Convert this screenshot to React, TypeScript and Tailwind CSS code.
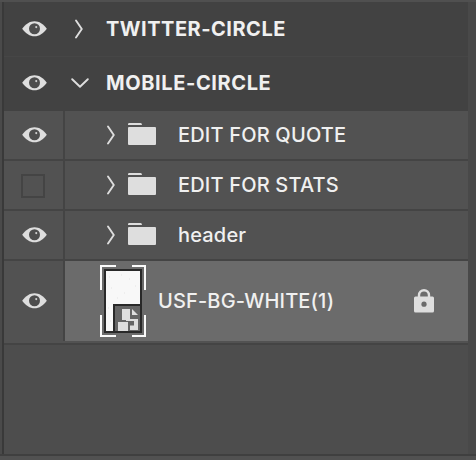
import React from 'react';
import { clsx } from 'clsx';

function EyeIcon() {
  return (
    <svg className="h-[15.5px] w-[25px] shrink-0" viewBox="0 0 26 16" preserveAspectRatio="none" aria-hidden="true">
      <path d="M0.2 8C4 3 8 0.2 13 0.2S22 3 25.8 8C22 13 18 15.8 13 15.8S4 13 0.2 8Z" fill="#dedede" />
      <circle cx="13" cy="8" r="5.7" fill="#4d4d4d" />
      <circle cx="14.8" cy="6.3" r="1.1" fill="#d2d2d2" />
    </svg>
  );
}

function ChevronRight() {
  return (
    <svg className="h-5 w-2.5" viewBox="0 0 10 20" fill="none" aria-hidden="true">
      <path d="M2 1.5L7.8 10L2 18.5" stroke="#dedede" strokeWidth="1.9" strokeLinecap="round" strokeLinejoin="round" />
    </svg>
  );
}

function ChevronDown() {
  return (
    <svg className="h-2.5 w-[18px]" viewBox="0 0 18 10" fill="none" aria-hidden="true">
      <path d="M1.2 1.2L9 8.7L16.8 1.2" stroke="#dedede" strokeWidth="1.9" strokeLinecap="round" strokeLinejoin="round" />
    </svg>
  );
}

function FolderIcon() {
  return (
    <svg className="h-[22px] w-7" viewBox="0 0 28 22" fill="#dedede" aria-hidden="true">
      <path d="M0 2V1.2Q0 0 1.2 0H12.6Q14 0 14 2Z" />
      <rect y="4" width="28" height="18" rx="1" />
    </svg>
  );
}

function LockIcon() {
  return (
    <svg className="h-6 w-5" viewBox="0 0 20 24" aria-hidden="true">
      <path d="M5 9V6.2a5 5 0 0110 0V9" fill="none" stroke="#dedede" strokeWidth="2.4" />
      <rect y="7.5" width="20" height="16" rx="1.5" fill="#dedede" />
      <circle cx="10" cy="15.2" r="2.6" fill="#6b6b6b" />
    </svg>
  );
}

// Smart object preview with the selection brackets around it
function Thumbnail() {
  return (
    <svg className="h-[72px] w-[46px]" viewBox="0 0 46 72" aria-hidden="true">
      <path d="M1 25V1H16M32 1H45V25M45 50V71H32M16 71H1V50" fill="none" stroke="#fafafa" strokeWidth="2" />
      <rect x="5" y="5" width="36" height="62" fill="#f8f8f8" stroke="#292929" strokeWidth="2" />
      <path d="M14 67V40H41" fill="none" stroke="#292929" strokeWidth="2" />
      <rect x="15" y="41" width="25" height="25" fill="#656565" />
      <path d="M22 44H30V54H38V65H30V60.5H34V56H26V55H22Z" fill="#dedede" />
      <path d="M32 44L38 50H32Z" fill="#dedede" />
      <rect x="18" y="57" width="10" height="9" fill="#dedede" />
      <path d="M9 12h1M21 10h1M29 14h1M11 23h1M24 28h1M35 21h1M17 33h1M8 43h1M10 56h1" stroke="#e4e4e4" />
    </svg>
  );
}

interface ArtboardRowProps {
  name: string;
  open?: boolean;
  className?: string;
}

function ArtboardRow({ name, open, className }: ArtboardRowProps) {
  return (
    <div className={clsx('flex items-center bg-[#424242] pl-[18px]', className)}>
      <EyeIcon />
      <div className={clsx('flex w-7 justify-center', open ? 'ml-[19px]' : 'ml-[18px]')}>
        {open ? <ChevronDown /> : <ChevronRight />}
      </div>
      <span
        className={clsx(
          'text-[20px] leading-6 font-bold',
          open ? 'ml-[12px] tracking-[0.6px]' : 'ml-[13px] tracking-[0.5px]'
        )}
      >
        {name}
      </span>
    </div>
  );
}

interface LayerRowProps {
  visible?: boolean;
  selected?: boolean;
  children: React.ReactNode;
}

function LayerRow({ visible = true, selected, children }: LayerRowProps) {
  return (
    <div className={clsx('flex border-b-2 border-[#444444] bg-[#525252]', selected ? 'h-[84px] pb-0.5' : 'h-[50px]')}>
      <div className="flex w-[61px] shrink-0 items-center border-r-2 border-[#444444] pl-[18px]">
        {visible ? <EyeIcon /> : <div className="mt-px -ml-px size-6 border-2 border-[#444444]" />}
      </div>
      <div className={clsx('flex flex-1 items-center', selected && 'bg-[#6b6b6b]')}>{children}</div>
    </div>
  );
}

function FolderRow({ name, visible }: { name: string; visible?: boolean }) {
  return (
    <LayerRow visible={visible}>
      <div className="ml-[41px]">
        <ChevronRight />
      </div>
      <div className="-mt-[2px] ml-[12px]">
        <FolderIcon />
      </div>
      <span className="ml-[22px] text-[20px] leading-6 font-[450] tracking-[0.18px]">{name}</span>
    </LayerRow>
  );
}

export default function App() {
  return (
    <div className="flex h-[460px] w-[476px] flex-col overflow-hidden bg-[#4b4b4b] font-['Inter',sans-serif] text-[#f0f0f0]">
      <div className="h-0.5 bg-[#505050]" />
      <div className="flex h-[452px] border-l-2 border-[#4a4a4a]">
        <div className="w-[466px] border-l-2 border-[#393939]">
          <ArtboardRow name="TWITTER-CIRCLE" className="h-[55px] border-b border-[#464646]" />
          <ArtboardRow name="MOBILE-CIRCLE" open className="h-[54px] pb-[2px]" />
          <FolderRow name="EDIT FOR QUOTE" />
          <FolderRow name="EDIT FOR STATS" visible={false} />
          <FolderRow name="header" />
          <LayerRow selected>
            <div className="ml-[35px]">
              <Thumbnail />
            </div>
            <span className="ml-[12px] text-[20px] leading-6 font-[450] tracking-[0.15px]">USF-BG-WHITE(1)</span>
            <div className="mr-[34px] ml-auto">
              <LockIcon />
            </div>
          </LayerRow>
          <div className="h-[109px] bg-[#4d4d4d]" />
        </div>
        <div className="flex-1 bg-[#494949]" />
      </div>
      <div className="h-1.5 border-t-2 border-[#3f3f3f] bg-[#515151]" />
    </div>
  );
}
